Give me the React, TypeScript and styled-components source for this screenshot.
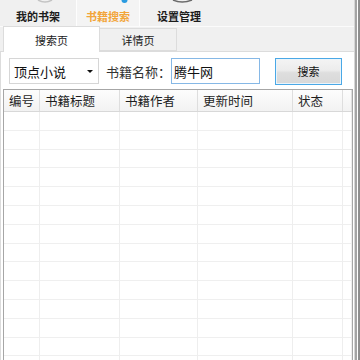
import React from "react";
import styled, { createGlobalStyle } from "styled-components";

const Global = createGlobalStyle`
  html, body { margin: 0; padding: 0; background: #f0f0f0; }
  body { font-family: "Noto Sans CJK SC", "Noto Sans", sans-serif; }
  * { box-sizing: border-box; }
`;

const Window = styled.div`
  width: 360px;
  height: 360px;
  display: flex;
  overflow: hidden;
  background: #f0f0f0;
`;

const LeftArea = styled.div`
  width: 354px;
  display: flex;
  flex-direction: column;
`;

const RightEdge = styled.div`
  width: 6px;
  border-left: 1px solid #d6d6d6;
  display: flex;
`;

const EdgeBand = styled.div<{ $w: number; $c: string }>`
  width: ${(p) => p.$w}px;
  background: ${(p) => p.$c};
`;

const TopTabs = styled.div`
  height: 27px;
  display: flex;
  border-bottom: 1px solid #fbfbfb;
  width: 360px;
`;

const TopTab = styled.div<{ $w: number; $active?: boolean; $sep?: boolean }>`
  width: ${(p) => p.$w}px;
  height: 26px;
  display: flex;
  flex-direction: column;
  justify-content: space-between;
  align-items: center;
  padding-bottom: 3px;
  background: ${(p) => (p.$active ? "#f4f4f4" : "#f0f0f0")};
  border-right: ${(p) => (p.$sep ? "1px solid #fdfdfd" : "none")};
  font-size: 11px;
  font-weight: bold;
  line-height: 14px;
  color: ${(p) => (p.$active ? "#f2a53a" : "#1c1c1c")};
`;

const TabIcon = styled.svg`
  display: block;
  flex: none;
`;

const InnerTabs = styled.div`
  height: 25px;
  display: flex;
  align-items: flex-end;
  padding-left: 3px;
  border-bottom: 1px solid #dcdcdc;
`;

const InnerTab = styled.div<{ $w: number; $active?: boolean }>`
  width: ${(p) => p.$w}px;
  height: ${(p) => (p.$active ? 26 : 23)}px;
  margin-bottom: ${(p) => (p.$active ? -1 : 0)}px;
  background: ${(p) => (p.$active ? "#ffffff" : "#f0f0f0")};
  border: 1px solid #dcdcdc;
  border-bottom: ${(p) => (p.$active ? "none" : "1px solid #dcdcdc")};
  border-left: ${(p) => (p.$active ? "1px solid #dcdcdc" : "none")};
  display: flex;
  align-items: center;
  justify-content: center;
  padding-top: ${(p) => (p.$active ? 0 : 1)}px;
  font-size: 11px;
  color: #1a1a1a;
  position: relative;
  z-index: ${(p) => (p.$active ? 1 : 0)};
`;

const TabPage = styled.div`
  flex: 1;
  background: #ffffff;
  border-left: 1px solid #dcdcdc;
  padding: 0 0 0 2px;
  display: flex;
  flex-direction: column;
`;

const Toolbar = styled.div`
  height: 37px;
  display: flex;
  align-items: center;
  padding-left: 6px;
  padding-top: 1px;
`;

const Combo = styled.div`
  width: 90px;
  height: 26px;
  border: 1px solid #d6d6d6;
  background: #ffffff;
  display: flex;
  align-items: center;
  justify-content: space-between;
  padding: 0 5px 0 4px;
  font-size: 13px;
  color: #111;
`;

const Arrow = styled.div`
  width: 0;
  height: 0;
  border-left: 3px solid transparent;
  border-right: 3px solid transparent;
  border-top: 3px solid #111;
`;

const Label = styled.div`
  margin-left: 7px;
  font-size: 13px;
  color: #333;
  white-space: nowrap;
`;

const TextBox = styled.div`
  width: 89px;
  height: 26px;
  margin-left: 0;
  border: 1px solid #86b8e6;
  background: #fff;
  display: flex;
  align-items: center;
  padding-left: 2px;
  font-size: 13px;
  color: #111;
`;

const Button = styled.div`
  width: 67px;
  height: 27px;
  margin-left: 15px;
  border: 1px solid #4aa8e6;
  background: linear-gradient(#f4f4f4 0%, #ececec 45%, #dedede 55%, #d8d8d8 100%);
  box-shadow: inset 0 0 0 1px #eaf4fb;
  display: flex;
  align-items: center;
  justify-content: center;
  font-size: 11px;
  color: #111;
`;

const COLS = "36px 80px 78px 95px 50px 1fr";

const Grid = styled.div`
  width: 350px;
  flex: 1;
  border: 1px solid #a6a6a6;
  border-bottom: none;
  overflow: hidden;
  background: #fff;
`;

const HeaderRow = styled.div`
  display: grid;
  grid-template-columns: ${COLS};
  height: 22px;
  background: linear-gradient(#fdfdfd, #f2f2f2);
  border-bottom: 1px solid #d8d8d8;
`;

const HeaderCell = styled.div`
  border-right: 1px solid #dedede;
  font-size: 12.5px;
  color: #1e1e1e;
  display: flex;
  align-items: center;
  padding-left: 5px;
  white-space: nowrap;
  overflow: hidden;
`;

const Row = styled.div`
  display: grid;
  grid-template-columns: ${COLS};
  height: 18.8px;
`;

const Cell = styled.div`
  border-right: 1px solid #eeeeee;
  border-bottom: 1px solid #efefef;
`;

const headers = ["编号", "书籍标题", "书籍作者", "更新时间", "状态", ""];
const rows = Array.from({ length: 14 }, (_, i) => i);

export default function App() {
  return (
    <>
      <Global />
      <Window>
        <LeftArea>
          <TopTabs>
            <TopTab $w={77} $sep>
              <TabIcon width={77} height={4} viewBox="0 0 77 4">
                <path d="M38 0 Q45 4 52 0" stroke="#c4c4c4" strokeWidth="1.5" fill="none" />
              </TabIcon>
              <span>我的书架</span>
            </TopTab>
            <TopTab $w={63} $active $sep>
              <TabIcon width={63} height={4} viewBox="0 0 63 4">
                <ellipse cx="47.5" cy="0" rx="3" ry="3" fill="#2a9be0" />
              </TabIcon>
              <span>书籍搜索</span>
            </TopTab>
            <TopTab $w={78}>
              <TabIcon width={78} height={4} viewBox="0 0 78 4">
                <path d="M33 0 Q42 4 52 0" stroke="#6a6a6a" strokeWidth="1.5" fill="none" />
              </TabIcon>
              <span>设置管理</span>
            </TopTab>
          </TopTabs>
          <InnerTabs>
            <InnerTab $w={97} $active>搜索页</InnerTab>
            <InnerTab $w={77}>详情页</InnerTab>
          </InnerTabs>
          <TabPage>
            <Toolbar>
              <Combo>
                <span>顶点小说</span>
                <Arrow />
              </Combo>
              <Label>书籍名称：</Label>
              <TextBox>腾牛网</TextBox>
              <Button>搜索</Button>
            </Toolbar>
            <Grid>
              <HeaderRow>
                {headers.map((h, i) => (
                  <HeaderCell key={i}>{h}</HeaderCell>
                ))}
              </HeaderRow>
              {rows.map((r) => (
                <Row key={r}>
                  {headers.map((_, i) => (
                    <Cell key={i} />
                  ))}
                </Row>
              ))}
            </Grid>
          </TabPage>
        </LeftArea>
        <RightEdge>
          <EdgeBand $w={2} $c="#a4a4a4" />
          <EdgeBand $w={1} $c="#ffffff" />
          <EdgeBand $w={2} $c="#8e8e8e" />
        </RightEdge>
      </Window>
    </>
  );
}
